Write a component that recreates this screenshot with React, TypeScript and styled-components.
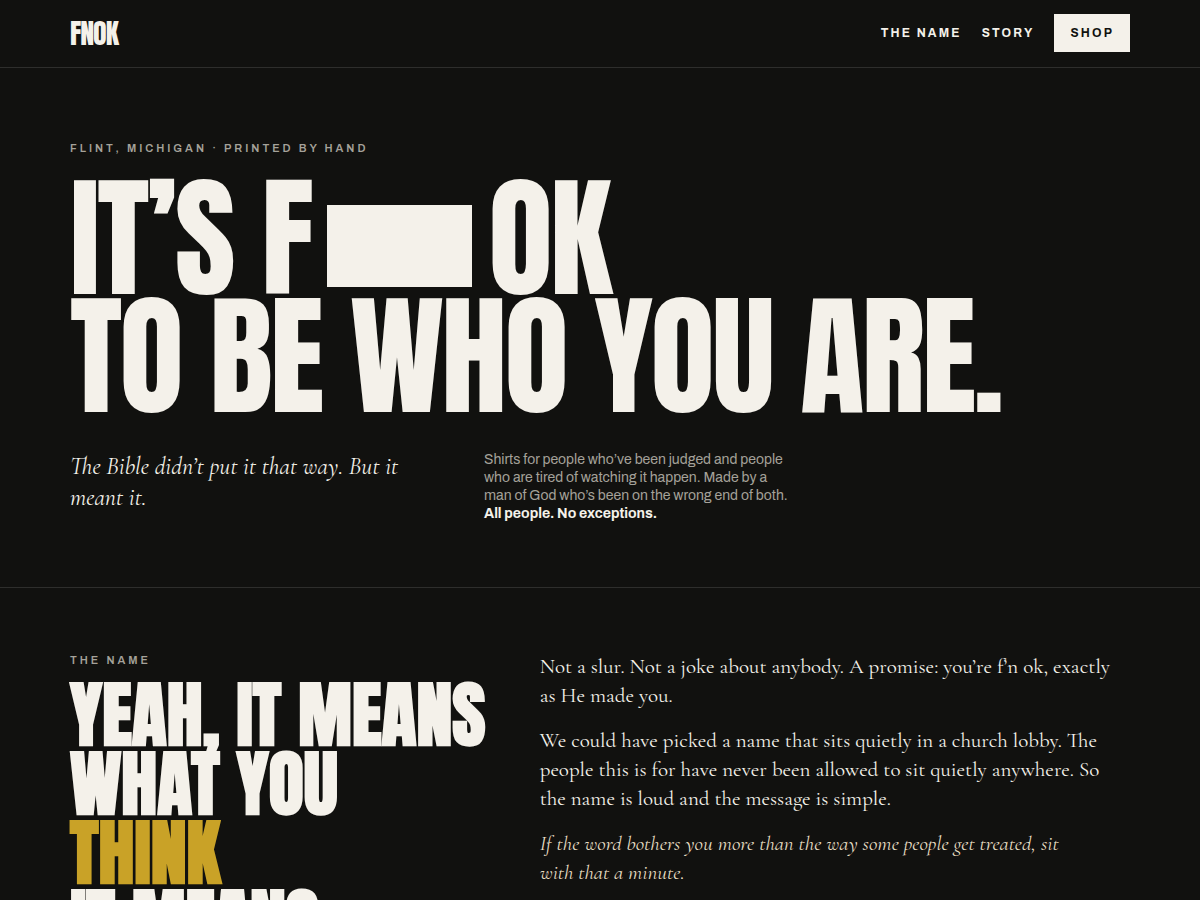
import React from 'react';
import styled, { createGlobalStyle } from 'styled-components';

const ink = '#11110f';
const paper = '#f4f1ea';
const muted = '#a5a29a';
const gold = '#c9a227';
const sand = '#e8dfc4';
const rule = '#2e2e2c';

const display = 'Anton, Impact, "Roboto Condensed", sans-serif';
const sans = 'Archivo, "Liberation Sans", sans-serif';
const serif = '"Cormorant Garamond", "Liberation Serif", serif';

const GlobalStyle = createGlobalStyle`
  *, *::before, *::after { box-sizing: border-box; }
  body {
    margin: 0;
    background: ${ink};
    color: ${paper};
    font-family: ${sans};
  }
`;

const Header = styled.header`
  border-bottom: 1px solid ${rule};
`;

const Wrap = styled.div`
  max-width: 1140px;
  margin: 0 auto;
  padding: 0 40px;
`;

const Bar = styled(Wrap)`
  display: flex;
  align-items: center;
  justify-content: space-between;
  padding-top: 14px;
  padding-bottom: 15px;
`;

const Logo = styled.a`
  font-family: ${display};
  font-size: 28px;
  line-height: 28px;
  letter-spacing: -1px;
  color: ${paper};
  text-decoration: none;
`;

const Nav = styled.nav`
  display: flex;
  align-items: center;
  gap: 20px;
`;

const NavLink = styled.a`
  font-size: 12px;
  line-height: 14px;
  font-weight: 700;
  letter-spacing: 0.18em;
  text-transform: uppercase;
  color: ${paper};
  text-decoration: none;
`;

const ShopLink = styled(NavLink)`
  padding: 12px 16px;
  background: ${paper};
  color: ${ink};
`;

const Section = styled.section<{ $top: number }>`
  padding: ${(p) => p.$top}px 0 64px;
  border-bottom: 1px solid ${rule};
`;

const Eyebrow = styled.p<{ $gap: number }>`
  margin: 0 0 ${(p) => p.$gap}px;
  font-size: 11px;
  line-height: 16px;
  font-weight: 600;
  letter-spacing: 3px;
  text-transform: uppercase;
  color: ${muted};
`;

const Headline = styled.h1`
  margin: 0 0 36px;
  font-family: ${display};
  font-size: 132px;
  line-height: 118px;
  font-weight: 400;
  letter-spacing: -0.02em;
  text-transform: uppercase;
`;

const Redaction = styled.span`
  display: inline-block;
  width: 145px;
  height: 82px;
  margin: 0 16px;
  vertical-align: 7px;
  background: ${paper};
`;

const HeroCopy = styled.div`
  display: flex;
  flex-wrap: wrap;
  gap: 40px;
`;

const Lead = styled.p`
  flex: 0 1 374px;
  margin: 0;
  font-family: ${serif};
  font-size: 24px;
  line-height: 31px;
  font-style: italic;
`;

const Intro = styled.p`
  flex: 0 1 304px;
  margin: 0;
  font-size: 14px;
  line-height: 18px;
  color: ${muted};

  strong {
    font-weight: 700;
    color: ${paper};
  }
`;

const NameGrid = styled(Wrap)`
  display: grid;
  grid-template-columns: 5fr 7fr;
  gap: 48px;
`;

const Title = styled.h2`
  margin: 0;
  font-family: ${display};
  font-size: 72px;
  line-height: 69px;
  font-weight: 700;
  text-transform: uppercase;
`;

const Accent = styled.span`
  display: block;
  color: ${gold};
`;

const Prose = styled.div`
  display: flex;
  flex-direction: column;
  gap: 16px;
  font-family: ${serif};
  font-size: 21px;
  line-height: 29px;

  p { margin: 0; }
`;

const Aside = styled.p`
  max-width: 540px;
  font-style: italic;
  color: ${sand};
`;

export default function App() {
  return (
    <>
      <GlobalStyle />
      <Header>
        <Bar>
          <Logo href="#top">FNOK</Logo>
          <Nav aria-label="Main">
            <NavLink href="#name">The Name</NavLink>
            <NavLink href="#story">Story</NavLink>
            <ShopLink href="#shop">Shop</ShopLink>
          </Nav>
        </Bar>
      </Header>
      <main>
        <Section id="top" $top={72}>
          <Wrap>
            <Eyebrow $gap={23}>Flint, Michigan · Printed by hand</Eyebrow>
            <Headline>
              It’s F<Redaction />OK<br />
              to be who you are.
            </Headline>
            <HeroCopy>
              <Lead>The Bible didn’t put it that way. But it meant it.</Lead>
              <Intro>
                Shirts for people who’ve been judged and people who are tired of watching it
                happen. Made by a man of God who’s been on the wrong end of both.{' '}
                <strong>All people. No exceptions.</strong>
              </Intro>
            </HeroCopy>
          </Wrap>
        </Section>
        <Section id="name" $top={64}>
          <NameGrid>
            <div>
              <Eyebrow $gap={12}>The Name</Eyebrow>
              <Title>
                Yeah, it means what you <Accent>think</Accent> it means.
              </Title>
            </div>
            <Prose>
              <p>
                Not a slur. Not a joke about anybody. A promise: you’re f’n ok, exactly as He made
                you.
              </p>
              <p>
                We could have picked a name that sits quietly in a church lobby. The people this is
                for have never been allowed to sit quietly anywhere. So the name is loud and the
                message is simple.
              </p>
              <Aside>
                If the word bothers you more than the way some people get treated, sit with that a
                minute.
              </Aside>
            </Prose>
          </NameGrid>
        </Section>
      </main>
    </>
  );
}
